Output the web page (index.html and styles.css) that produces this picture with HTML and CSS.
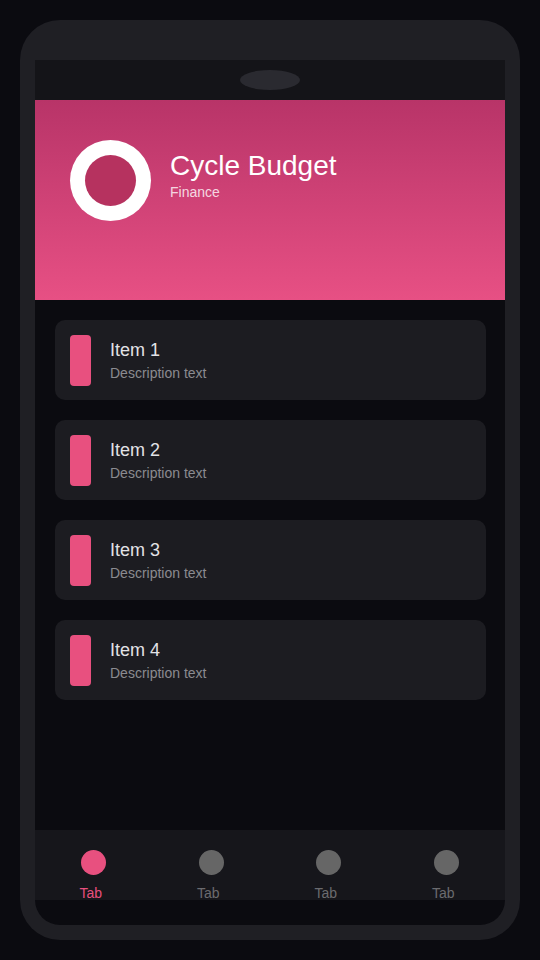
FILE: index.html
```html
<!DOCTYPE html>
<html>
<head lang="en">
    <meta charset="UTF-8">
    <title>Cycle Budget</title>
    <link rel="stylesheet" href="styles.css">
</head>
<body>
<div class="phone">
    <div class="screen">
        <div class="status">
            <div class="notch"></div>
        </div>
        <div class="header">
            <div class="logo"><div class="logo-in"></div></div>
            <div class="title-box">
                <div class="title">Cycle Budget</div>
                <div class="sub">Finance</div>
            </div>
        </div>
        <ul class="list">
            <li class="card">
                <div class="bar"></div>
                <div class="info">
                    <div class="name">Item 1</div>
                    <div class="desc">Description text</div>
                </div>
            </li>
            <li class="card">
                <div class="bar"></div>
                <div class="info">
                    <div class="name">Item 2</div>
                    <div class="desc">Description text</div>
                </div>
            </li>
            <li class="card">
                <div class="bar"></div>
                <div class="info">
                    <div class="name">Item 3</div>
                    <div class="desc">Description text</div>
                </div>
            </li>
            <li class="card">
                <div class="bar"></div>
                <div class="info">
                    <div class="name">Item 4</div>
                    <div class="desc">Description text</div>
                </div>
            </li>
        </ul>
        <div class="tabs">
            <div class="tab on"><span class="dot"></span><span class="label">Tab</span></div>
            <div class="tab"><span class="dot"></span><span class="label">Tab</span></div>
            <div class="tab"><span class="dot"></span><span class="label">Tab</span></div>
            <div class="tab"><span class="dot"></span><span class="label">Tab</span></div>
        </div>
        <div class="home"></div>
    </div>
</div>
</body>
</html>
```

FILE: styles.css
```css
*{
    margin: 0;
    padding: 0;
    list-style: none;
    box-sizing: border-box;
}
html,body{
    width: 100%;
    height: 100%;
}
body{
    background: #0b0b10;
    font-family: "Liberation Sans", Arial, sans-serif;
    padding: 20px;
}
.phone{
    width: 500px;
    height: 920px;
    background: #1f1f24;
    border-radius: 40px;
    padding: 40px 15px 15px;
}
.screen{
    height: 100%;
    background: #0b0b10;
    border-radius: 0 0 25px 25px;
    overflow: hidden;
    display: flex;
    flex-direction: column;
}
.status{
    height: 40px;
    background: #141418;
    display: flex;
    justify-content: center;
    align-items: center;
}
.notch{
    width: 60px;
    height: 20px;
    border-radius: 50%;
    background: #2a2a30;
}
.header{
    height: 200px;
    background: linear-gradient(#b83468, #e75084);
    padding: 40px 35px;
    display: flex;
    align-items: flex-start;
}
.logo{
    width: 81px;
    height: 81px;
    border-radius: 50%;
    background: #fff;
    padding: 15px;
    flex-shrink: 0;
}
.logo-in{
    width: 100%;
    height: 100%;
    border-radius: 50%;
    background: #b6325f;
}
.title-box{
    margin-left: 19px;
    padding-top: 10px;
}
.title{
    font-size: 28px;
    color: #fff;
}
.sub{
    font-size: 14px;
    color: rgba(255,255,255,0.8);
    margin-top: 2px;
}
.list{
    flex: 1;
    padding: 20px 19px 20px 20px;
    display: flex;
    flex-direction: column;
    gap: 20px;
}
.card{
    height: 80px;
    background: #1c1c21;
    border-radius: 10px;
    padding: 15px;
    display: flex;
    align-items: center;
}
.bar{
    width: 21px;
    height: 51px;
    border-radius: 4px;
    background: #e8507f;
    flex-shrink: 0;
}
.info{
    margin-left: 19px;
}
.name{
    font-size: 18px;
    color: #e2e2e6;
}
.desc{
    font-size: 14px;
    color: #8b8b90;
    margin-top: 4px;
}
.tabs{
    height: 70px;
    background: #16161b;
    display: flex;
}
.tab{
    flex: 1;
    display: flex;
    flex-direction: column;
    align-items: center;
    padding-top: 20px;
}
.dot{
    width: 25px;
    height: 25px;
    border-radius: 50%;
    background: #666;
    flex-shrink: 0;
}
.label{
    font-size: 14px;
    line-height: 16px;
    color: #6b6b6f;
    margin-top: 10px;
    margin-right: 6px;
}
.tab.on .dot{
    background: #e8507f;
}
.tab.on .label{
    color: #e8507f;
}
.home{
    height: 25px;
    flex-shrink: 0;
}
```
